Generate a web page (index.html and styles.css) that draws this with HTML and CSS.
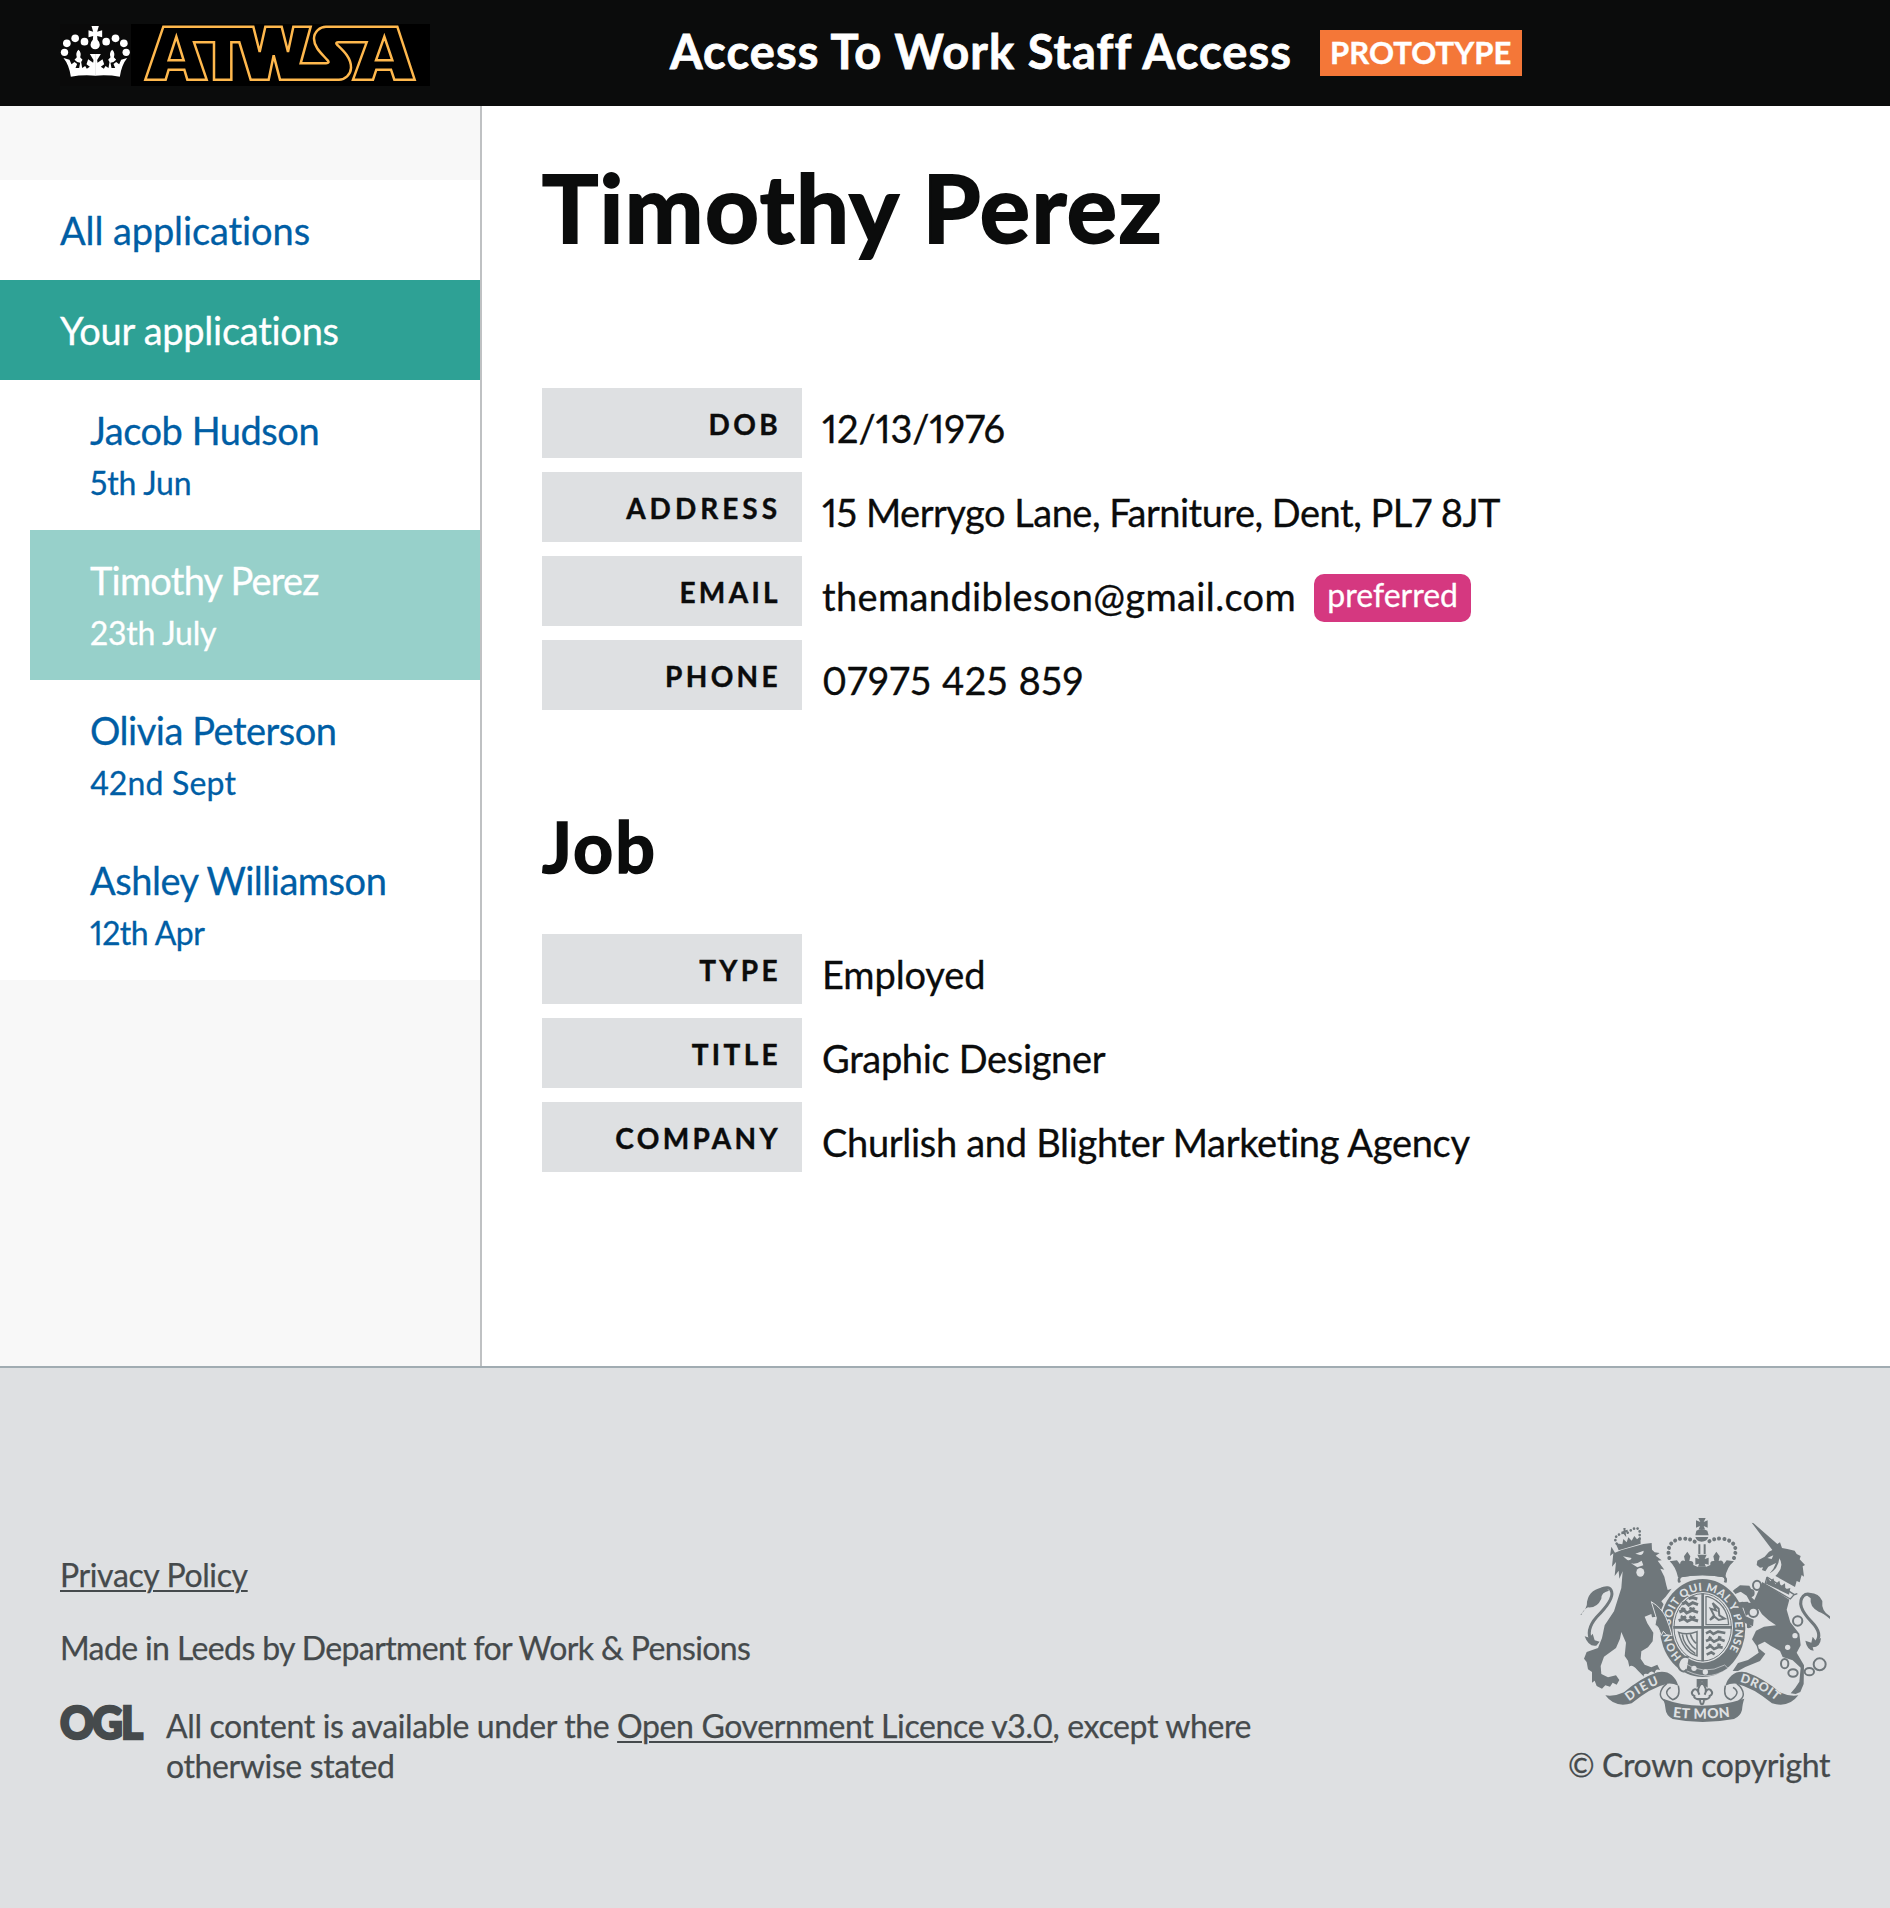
FILE: index.html
```html
<!DOCTYPE html>
<html lang="en">
<head>
<meta charset="utf-8">
<title>Access To Work Staff Access</title>
<link rel="stylesheet" href="styles.css">
</head>
<body>
<header class="header">
  <a class="header__logo" href="#" aria-label="ATWSA">
    <svg class="crown" viewBox="61 72 212 186" aria-hidden="true">
      <defs>
        <g id="crown-half">
          <circle cx="74" cy="157" r="11"/><circle cx="81" cy="130" r="11.500"/><circle cx="106" cy="115" r="11.500"/><circle cx="134" cy="125" r="11.500"/>
          <path d="M71 174L89 179 95 193 104 186 112 192 107 204 118 204 121 188 112 186 104 179 111 172Q106 158 116 149Q126 158 121 172L128 179 124 186 127 204 136 198 141 206 150 200 140 193 145 178 160 188 161 180 150 162H167V227Q128 224 93 230Q88 195 71 174Z"/>
        </g>
      </defs>
      <g fill="#fff">
        <use href="#crown-half"/>
        <use href="#crown-half" transform="translate(333 0) scale(-1 1)"/>
        <path d="M155 78h22l-5 17 15-4v21l-15-4 1 11q7 7 7 15a14 14 0 0 1-28 0q0-8 7-15l1-11-14 4V91l14 4z"/>
      </g>
    </svg>
    <svg class="wordmark" viewBox="273 72 897 186" aria-hidden="true">
      <path d="M316 239L370 80H640L659 156L676 80H725L744 156L760 80H812L782 190H858Q870 189 863 181C845 161 822 142 822 116C822 95 840 80 858 80H1072L1124 239H1063L1053 209H1009L999 239H939L980 127H894Q885 127 892 135C911 153 934 174 933 204C932 224 915 239 897 239H720L701 166L686 239H632L598 127H574V239H522V127H462L500 239H442L433 209H386L377 239ZM409 110L386 181H431ZM1033 110L1008 181H1057Z"/>
    </svg>
  </a>
  <span class="header__title">Access To Work Staff Access</span>
  <strong class="phase-tag">PROTOTYPE</strong>
</header>

<div class="page">
  <nav class="sidebar">
    <ul class="nav">
      <li><a class="nav__link nav__link--all" href="#">All applications</a></li>
      <li><a class="nav__link nav__link--active" href="#">Your applications</a></li>
    </ul>
    <ul class="cases">
      <li><a class="case" href="#"><span class="case__name">Jacob Hudson</span><span class="case__date">5th Jun</span></a></li>
      <li><a class="case case--active" href="#"><span class="case__name case__name--tight">Timothy Perez</span><span class="case__date">23th July</span></a></li>
      <li><a class="case" href="#"><span class="case__name">Olivia Peterson</span><span class="case__date case__date--loose">42nd Sept</span></a></li>
      <li><a class="case" href="#"><span class="case__name">Ashley Williamson</span><span class="case__date case__date--tight">12th Apr</span></a></li>
    </ul>
  </nav>

  <main class="main">
    <h1 class="heading">Timothy Perez</h1>
    <dl class="details">
      <div class="details__row"><dt>DOB</dt><dd class="is-date">12/13/1976</dd></div>
      <div class="details__row"><dt class="is-wide">ADDRESS</dt><dd class="is-address">15 Merrygo Lane, Farniture, Dent, PL7 8JT</dd></div>
      <div class="details__row"><dt>EMAIL</dt><dd class="is-email"><span>themandibleson@gmail.com</span><span class="pill">preferred</span></dd></div>
      <div class="details__row"><dt>PHONE</dt><dd class="is-phone">07975 425 859</dd></div>
    </dl>
    <h2 class="subheading">Job</h2>
    <dl class="details">
      <div class="details__row"><dt>TYPE</dt><dd class="is-type">Employed</dd></div>
      <div class="details__row"><dt>TITLE</dt><dd>Graphic Designer</dd></div>
      <div class="details__row"><dt>COMPANY</dt><dd class="is-company">Churlish and Blighter Marketing Agency</dd></div>
    </dl>
  </main>
</div>

<footer class="footer">
  <div class="footer__meta">
    <p><a href="#">Privacy Policy</a></p>
    <p class="footer__made">Made in Leeds by Department for Work &amp; Pensions</p>
    <div class="licence">
      <svg class="ogl" viewBox="0 0 81 36" aria-hidden="true"><text x="0" y="33.500" textLength="81" lengthAdjust="spacingAndGlyphs">OGL</text></svg>
      <p>All content is available under the <a href="#">Open Government Licence v3.0</a>, except where<br>otherwise stated</p>
    </div>
  </div>
  <div class="footer__crest">
    <svg class="crest" viewBox="60 54 750 612" aria-hidden="true">
      <defs>
        <path id="garter" d="M366 470A97 112 0 1 1 496 465"/>
        <path id="scroll-left" d="M207 604Q252 567 309 548"/>
        <path id="scroll-mid" d="M338 651Q425 662 520 649"/>
        <path id="scroll-right" d="M539 546Q600 561 652 606"/>
      </defs>
      <!-- lion -->
      <path d="M165 158l20-8 65-18 25-3 1 20 8 8 15 2-12 8 18 14-12 1 20 27-12-3 12 24 6 26 4 14 12-4-18 24-13 14 22 28 14 40-4 28-10 6-3-12-9 8-6-16-8-4 2-16-12-2 2-14-16 2-2-10-20 8 8 20 18 28-2 26-14 18-20 12-2 22 12 18 20 8 18-8 8 16q-14-6-16 10-10-12-20 2-16-4-12 8l-20-20q-16-18-24-10l-4-18-10-14 4-40-14-32-4 20-12 28-36 26-10 28 2 24 20 10 24-6 10 14-8 14-12-6-8 12-14-4-10 10-16-8-6-16-8 6v-32l-12-8-4-22-8-10 8-20 34-12 12-30 8-38 28-42 22-70 4-50-10 22-2-24-12 16 4-42-12 14 4-40-10 8 4-28z"/>
      <path d="M95 426q-20-35 15-75 52-52 45-76-6-20-35-6" fill="none" stroke="#6f777b" stroke-width="9"/>
      <path d="M61 345q22-22 20-40 8-40 56-43l10 10q-24 5-23 24-12 28-40 26-14 6-20 23zM74 409l14 4 10-12 6 20 15 4-10 12q-24 4-35-28z"/>
      <g fill="#dee0e2"><path d="M189 169l26 5q-4 9-13 6zM226 161l25-9q0 12-11 13zM213 190q14 5 32-8l5 14-18 6z"/><ellipse cx="241" cy="217" rx="12" ry="13"/></g>
      <path d="M167 130L176 151 242 131 241 110 231 118 223 108 215 122 205 112 200 127 190 117 187 133Z"/>
      <g fill="none" stroke="#6f777b" stroke-width="8" stroke-linecap="round" stroke-dasharray=".1 11"><path d="M170 131Q157 108 185 101M203 98Q230 75 239 92V119"/></g>
      <path d="M190 84h7l-1 7 7-2v7l-6 1 2 15-8-10-7 1v-8l7-2z"/>
      <!-- unicorn -->
      <path d="M575 68L581 70 652 132 660 127 666 144 682 147 704 152 710 162 722 168 719 178 735 195 728 199 732 230 725 225 719 247 710 243 705 261 630 219 640 206 648 189 625 200 616 214 606 210 609 202 600 203 590 195 592 182 614 170 627 155 637 150Z"/>
      <path d="M626 222Q655 208 658 175Q676 202 642 232ZM622 174l18-8-5 11z" fill="#dee0e2"/>
      <path d="M621 231l82 53 9-3M621 231l-6 22 76 44 12-14" fill="none" stroke="#6f777b" stroke-width="4"/>
      <path d="M618 251l4-20 9 13 9-9 6 18 12-11 4 17 13-9 1 18 15-4-4 20z"/>
      <path d="M607 246l81 53-8 30 11 38 27 34 4 35-12 22 22 38-1 56-10 24-14 6-15-2 14-17 12-18 4-42-24-22-30-10-8-18-28-16-18-12-20 10 2 10 20 16-16 22-44 18-22 12-16 0 16-24 30-9 32-22-6-20-14-20 12-26 24-12 36-4-22-15-20-18-10-16-20 8-18 12-8 6 14 16 12 12-10 4-22-6-12-19-12-27-8-15 18-5 16-8 26 4-12-22-18-12-18 8-9-8 14-10 24-1 14 12 6 14 10 10z"/>
      <g fill="#dee0e2" stroke="#6f777b" stroke-width="6"><ellipse cx="591" cy="256" rx="12" ry="14"/><circle cx="572" cy="279" r="9"/><circle cx="580" cy="337" r="14"/><circle cx="713" cy="363" r="14"/><ellipse cx="674" cy="491" rx="11" ry="14"/><ellipse cx="699" cy="519" rx="14" ry="11"/><ellipse cx="748" cy="515" rx="14" ry="11"/><circle cx="779" cy="493" r="18"/></g>
      <g fill="#dee0e2"><circle cx="705" cy="407" r="8"/><circle cx="683" cy="442" r="8"/></g>
      <path d="M768 427q22-25-14-62-48-50-24-77 12-12 30 0" fill="none" stroke="#6f777b" stroke-width="9"/>
      <path d="M734 281q40-8 53 22-4 30 23 46v8q-20-18-34-22-28-14-24-40zM736 422l18 6 4-18 9 12 16-8q-2 28-25 28l3 10q-20-2-25-30z"/>
      <!-- crown -->
      <path d="M415 54h22l-6 12 12-5v22l-12-5 4 10h-19l4-10-12 5V61l13 5zM409 92q16-8 33 0l4 14h-40zM406 111h39q-4 14-20 14-15 0-19-14z"/>
      <g fill="none" stroke="#6f777b" stroke-width="12" stroke-linecap="round" stroke-dasharray=".1 15"><path d="M328 174Q316 125 362 116 390 114 407 127M522 174Q540 125 488 116 460 114 443 127"/></g>
      <path d="M415 133h6v29h-6zM431 133h6v29h-6zM412 164h28l-6 13 12-4v21l-12-3 4 9h-24l3-9-11 3v-21l12 4z"/>
      <path d="M329 184l22-3 9 12q2-15 15-10l-3-14 10-14 9 14-3 14q14-2 12 12l12 5h27l12-5q-2-14 12-12l-3-14 9-14 10 14-3 14q13-5 15 10l9-12 22 3q-22 18-26 48-71-15-142 0-7-32-25-48z"/>
      <path d="M360 247q-6-12 3-18 64-12 128 0 9 6 3 18" fill="none" stroke="#6f777b" stroke-width="6"/>
      <!-- garter -->
      <ellipse cx="428" cy="384" rx="133" ry="152" fill="#dee0e2"/>
      <path d="M357 247q-4-12 6-18 64-12 128 0 10 6 6 18" fill="none" stroke="#6f777b" stroke-width="6"/>
      <ellipse cx="428" cy="384" rx="128" ry="147"/>
      <ellipse cx="428" cy="382" rx="91" ry="106" fill="#dee0e2"/>
      <text class="motto"><textPath href="#garter" textLength="490">HONI SOIT QUI MAL Y PENSE</textPath></text>
      <g fill="none" stroke="#6f777b">
        <ellipse cx="428" cy="382" rx="86" ry="101" stroke-width="3"/>
        <path d="M428 280v204M340 382h176" stroke-width="8"/>
        <path d="M438 290v84h68q-4-64-62-84z" stroke-width="4"/>
        <path d="M356 397q26 10 55-2v72q-40-10-55-70zM367 403q4 34 39 58M379 404q6 28 28 44M391 402q4 16 17 28" stroke-width="4.500"/>
        <path d="M366 312l12-5 8 8 12-7 16 6M358 336l14-6 8 9 16-8 18 6M356 362l16-6 10 8 14-7 18 6M386 296l12-3 14 4" stroke-width="9"/>
        <path d="M364 324l6 6 4-6M388 324l10 4 6-4M362 349l10 4 6-4M388 349l10 5 8-4M438 400l12-6 10 8 14-7 22 4M438 423l14-6 10 8 16-8 16 6M438 445l14-7 10 9 14-6 12 2M440 464l14-7 10 6M446 411l8 4M474 411l10 3M446 434l8 4M472 434l10 2" stroke-width="8"/>
        <path d="M450 360l12-14-10-20 16 5-10-22 18 17 2 20 16 10-18 4-12-10z" stroke-width="6"/>
      </g>
      <path d="M370 487q60 42 124 8l10 10q-64 45-139-1z" stroke="#dee0e2" stroke-width="2"/>
      <path d="M386 473q-18-9-28 10-8 16 4 28 10 8 18-3" fill="#dee0e2" stroke="#6f777b" stroke-width="6"/>
      <g fill="#dee0e2"><circle cx="402" cy="505" r="8"/><circle cx="436" cy="516" r="8"/></g>
      <path d="M274 305q32 20 44 48 12 28 18 54l-17-3-9-10-6 12-10-24-9-8 4-20z" stroke="#dee0e2" stroke-width="3"/>
      <path d="M522 270l18-14 28 1 12 22-6 14-18-22-20 5zM535 307l28-2 10 14-26 4 10 26 24 10-2 20-24-10-16-27z"/>
      <!-- fleur and scroll -->
      <path d="M410 537h33v26l-8-6-9-13-9 13-7 6z"/>
      <path d="M426 548q18 17 8 36 7-22 18-14 10 12-3 18 2 8-17 11-1 14-6 14t-6-14q-20-3-17-11-13-6-3-18 11-8 18 14-10-19 8-36zM413 597h26" fill="none" stroke="#6f777b" stroke-width="6"/>
      <path d="M136 586Q165 590 192 577Q240 535 292 517Q338 508 355 557Q338 549 322 551Q272 562 215 610Q165 625 136 586Z"/>
      <path d="M715 586Q686 590 659 577Q611 535 559 517Q513 508 496 557Q513 549 529 551Q579 562 636 610Q686 625 715 586Z"/>
      <path d="M355 557q8 36-17 42-18-10-18-22 0-8 12-15M321 550q-20 16-20 33 0 12 14 20M496 557q-8 36 17 42 18-10 18-22 0-8-12-15M530 550q20 16 20 33 0 12-14 20" fill="none" stroke="#6f777b" stroke-width="4.500"/>
      <path d="M309 596q110 42 244 0-5 12-7 34-4 18-24 27-96 18-184 0-20-12-21-28-2-20-8-33z"/>
      <g class="scroll-text">
        <text><textPath href="#scroll-left" textLength="104">DIEU</textPath></text>
        <text class="scroll-text__mid"><textPath href="#scroll-mid" textLength="173">ET MON</textPath></text>
        <text><textPath href="#scroll-right" textLength="124">DROIT</textPath></text>
      </g>
    </svg>
    <p class="footer__copyright">© Crown copyright</p>
  </div>
</footer>
</body>
</html>
```
FILE: styles.css
```css
* { box-sizing: border-box; }

body {
  margin: 0;
  font-family: Lato, "Open Sans", sans-serif;
  font-variant-ligatures: none;
  font-variant-numeric: proportional-nums;
  color: #0b0c0c;
  background: #fff;
}

ul, dl, dd, p, h1, h2 { margin: 0; padding: 0; }
ul { list-style: none; }
a { color: inherit; }

/* Header */
.header {
  display: flex;
  align-items: flex-start;
  height: 106px;
  padding-left: 60px;
  background: #0b0c0c;
  color: #fff;
}
.header__logo { display: flex; margin-top: 24px; }
.crown { width: 71px; height: 62px; background: #0a0a0a; }
.wordmark { width: 299px; height: 62px; background: #000; fill: none; stroke: #ffb84d; stroke-width: 7.5; }
.header__title {
  width: 650px;
  margin: 21px 0 0 240px;
  font-size: 47px;
  line-height: 60px;
  font-weight: 700;
  letter-spacing: 1.1px;
  -webkit-text-stroke: .8px;
  white-space: nowrap;
}
.phase-tag {
  width: 202px;
  height: 46px;
  margin-top: 30px;
  padding-left: 10px;
  background: #f47738;
  font-size: 31px;
  line-height: 45px;
  letter-spacing: .05px;
  -webkit-text-stroke: .4px;
}

/* Page columns */
.page { display: grid; grid-template-columns: 482px 1fr; height: 1260px; }
.sidebar { padding-top: 74px; background: #f8f8f8; border-right: 2px solid #bfc1c3; color: #005ea5; }
.sidebar a { display: block; text-decoration: none; }
.nav { background: #fff; }
.nav__link { height: 100px; padding: 25px 0 25px 60px; font-size: 38px; line-height: 50px; letter-spacing: -.27px; -webkit-text-stroke: .3px; }
.nav__link--all { letter-spacing: -.1px; }
.nav__link--active { background: #2ea195; color: #fff; }
.cases { padding-left: 30px; background: #fff; }
.case { height: 150px; padding: 25px 0 0 60px; -webkit-text-stroke: .3px; }
.case--active { background: #97d0ca; color: #fff; }
.case__name { display: block; font-size: 38px; line-height: 50px; letter-spacing: -.48px; }
.case__name--tight { letter-spacing: -.78px; }
.case__date { display: block; margin-top: 8px; font-size: 32px; line-height: 40px; letter-spacing: -.2px; }
.case__date--loose { letter-spacing: .2px; }
.case__date--tight { letter-spacing: -.5px; }

/* Applicant */
.main { padding: 51px 0 0 60px; }
.heading { font-size: 94px; line-height: 100px; letter-spacing: 1.5px; margin-bottom: 131px; -webkit-text-stroke: 2px; }
.subheading { font-size: 70px; line-height: 80px; letter-spacing: 2px; margin: 96px 0 48px; -webkit-text-stroke: 1.5px; }
.details { display: grid; gap: 14px; }
.details__row { display: flex; height: 70px; }
.details dt {
  width: 260px;
  padding: 19px 21px 0 0;
  background: #dee0e2;
  font-size: 28px;
  line-height: 34px;
  font-weight: 700;
  letter-spacing: 3.35px;
  text-align: right;
  -webkit-text-stroke: .4px;
}
.details dt.is-wide { letter-spacing: 4px; }
.details dd { padding: 15px 0 0 20px; font-size: 38px; line-height: 50px; letter-spacing: -.33px; white-space: nowrap; -webkit-text-stroke: .3px; }
.details dd.is-date { letter-spacing: -.1px; }
.details dd.is-address { letter-spacing: -.5px; }
.details dd.is-email { display: flex; letter-spacing: .36px; }
.details dd.is-phone { letter-spacing: .6px; }
.details dd.is-type { letter-spacing: -.1px; }
.details dd.is-company { letter-spacing: -.31px; }
.pill {
  width: 157px;
  height: 48px;
  margin: 3px 0 0 18px;
  border-radius: 10px;
  background: #d53880;
  color: #fff;
  font-size: 32px;
  line-height: 42px;
  letter-spacing: 0;
  text-align: center;
}

/* Footer */
.footer {
  display: flex;
  justify-content: space-between;
  height: 542px;
  padding: 0 60px;
  border-top: 2px solid #a1acb2;
  background: #dee0e2;
  color: #454a4c;
  font-size: 32px;
  line-height: 40px;
  letter-spacing: -.38px;
  -webkit-text-stroke: .25px;
}
.footer a { text-decoration-thickness: 2px; text-underline-offset: 3px; }
.footer__meta { padding-top: 187px; }
.footer__made { margin-top: 33px; letter-spacing: -.62px; }
.licence { display: flex; margin-top: 38px; }
.ogl { width: 81px; height: 36px; margin: -1px 25px 0 0; fill: #454a4c; overflow: visible; }
.ogl text { font: 900 45px Lato, sans-serif; stroke: #454a4c; stroke-width: 2.5; letter-spacing: -2px; }
.footer__crest { padding-top: 150px; text-align: right; }
.crest { display: block; width: 250px; height: 204px; margin-left: auto; fill: #6f777b; overflow: visible; -webkit-text-stroke: 0; }
.crest text { fill: #dee0e2; font-family: Lato, sans-serif; font-weight: 900; letter-spacing: 0; }
.motto { font-size: 33px; }
.scroll-text { font-size: 37px; }
.scroll-text__mid { font-size: 42px; }
.footer__copyright { margin-top: 23px; letter-spacing: -.38px; }
```
